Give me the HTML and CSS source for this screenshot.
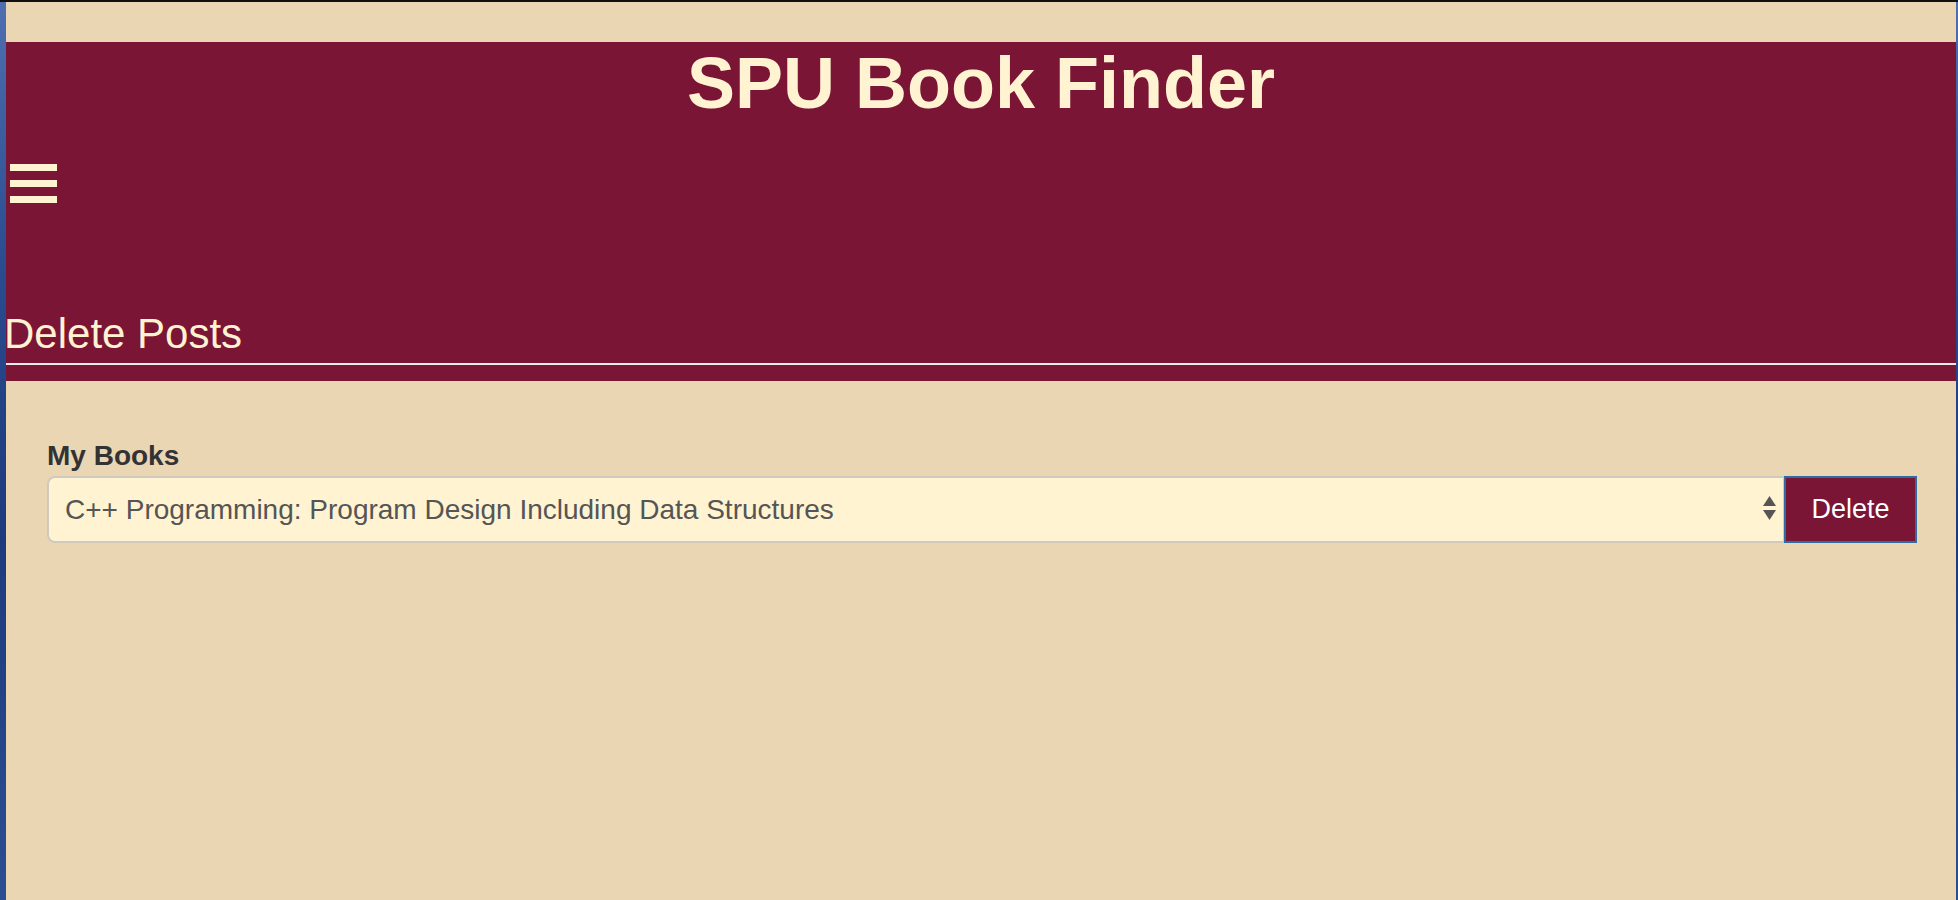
FILE: index.html
```html
<!DOCTYPE html>
<html lang="en">
<head>
<meta charset="utf-8">
<title>SPU Book Finder</title>
<link rel="stylesheet" href="styles.css">
</head>
<body>
<div class="window">
  <div class="top-gap"></div>
  <header class="site-header">
    <h1 class="site-title">SPU Book Finder</h1>
    <button class="menu-toggle" aria-label="Menu">
      <span class="menu-bar"></span>
      <span class="menu-bar"></span>
      <span class="menu-bar"></span>
    </button>
    <h2 class="page-title">Delete Posts</h2>
    <div class="header-rule"></div>
  </header>
  <main class="content">
    <form class="delete-form">
      <label class="field-label" for="books">My Books</label>
      <div class="input-group">
        <div class="select-wrap">
          <select id="books" class="book-select">
            <option>C++ Programming: Program Design Including Data Structures</option>
          </select>
          <svg class="select-arrows" width="13" height="24" viewBox="0 0 13 24" aria-hidden="true">
            <polygon points="0,10 6.5,0 13,10" fill="#555"/>
            <polygon points="0,14 13,14 6.5,24" fill="#555"/>
          </svg>
        </div>
        <button type="button" class="delete-btn">Delete</button>
      </div>
    </form>
  </main>
</div>
</body>
</html>
```
FILE: styles.css
```css
html, body {
  margin: 0;
  padding: 0;
}

body {
  background: linear-gradient(180deg, #4f6fb0 0%, #2a4b8e 30%, #1d3a7c 60%, #2c4f92 100%);
  border-top: 2px solid #111;
  font-family: "Liberation Sans", Arial, Helvetica, sans-serif;
  height: 898px;
  overflow: hidden;
}

.window {
  margin: 0 2px 0 6px;
  height: 898px;
  background: #ebd6b4;
}

.top-gap {
  height: 40px;
}

.site-header {
  background: #7b1535;
  color: #fff3d1;
  padding-bottom: 16px;
}

.site-title {
  margin: 0;
  font-size: 72px;
  font-weight: bold;
  line-height: normal;
  text-align: center;
}

.menu-toggle {
  display: flex;
  flex-direction: column;
  gap: 9px;
  margin: 40px 0 0 4px;
  padding: 0;
  border: 0;
  background: none;
}

.menu-bar {
  display: block;
  width: 47px;
  height: 7px;
  background: #fff3d1;
}

.page-title {
  margin: 107px 0 0;
  font-size: 42px;
  font-weight: normal;
  line-height: 48px;
  text-indent: -2px;
}

.header-rule {
  margin-top: 5px;
  height: 2px;
  background: #ececec;
}

.content {
  padding: 58px 39px 0 41px;
}

.field-label {
  display: block;
  font-size: 28px;
  font-weight: bold;
  line-height: 34px;
  color: #333;
  margin-bottom: 3px;
}

.input-group {
  display: flex;
  height: 67px;
}

.select-wrap {
  position: relative;
  flex: 1;
  display: flex;
}

.book-select {
  flex: 1;
  appearance: none;
  -webkit-appearance: none;
  margin: 0;
  height: 67px;
  padding: 0 40px 0 16px;
  border: 2px solid #cfcac0;
  border-right-width: 1px;
  border-radius: 8px 0 0 8px;
  background: #fff3d1;
  color: #555;
  font-family: "Liberation Sans", Arial, Helvetica, sans-serif;
  font-size: 28px;
  outline: none;
}

.select-arrows {
  position: absolute;
  right: 8px;
  top: 20px;
  pointer-events: none;
}

.delete-btn {
  height: 67px;
  width: 133px;
  margin: 0;
  padding: 0;
  border: 2px solid #2e6da4;
  border-radius: 0;
  background: #7b1535;
  color: #fff;
  font-family: "Liberation Sans", Arial, Helvetica, sans-serif;
  font-size: 27px;
}
```
